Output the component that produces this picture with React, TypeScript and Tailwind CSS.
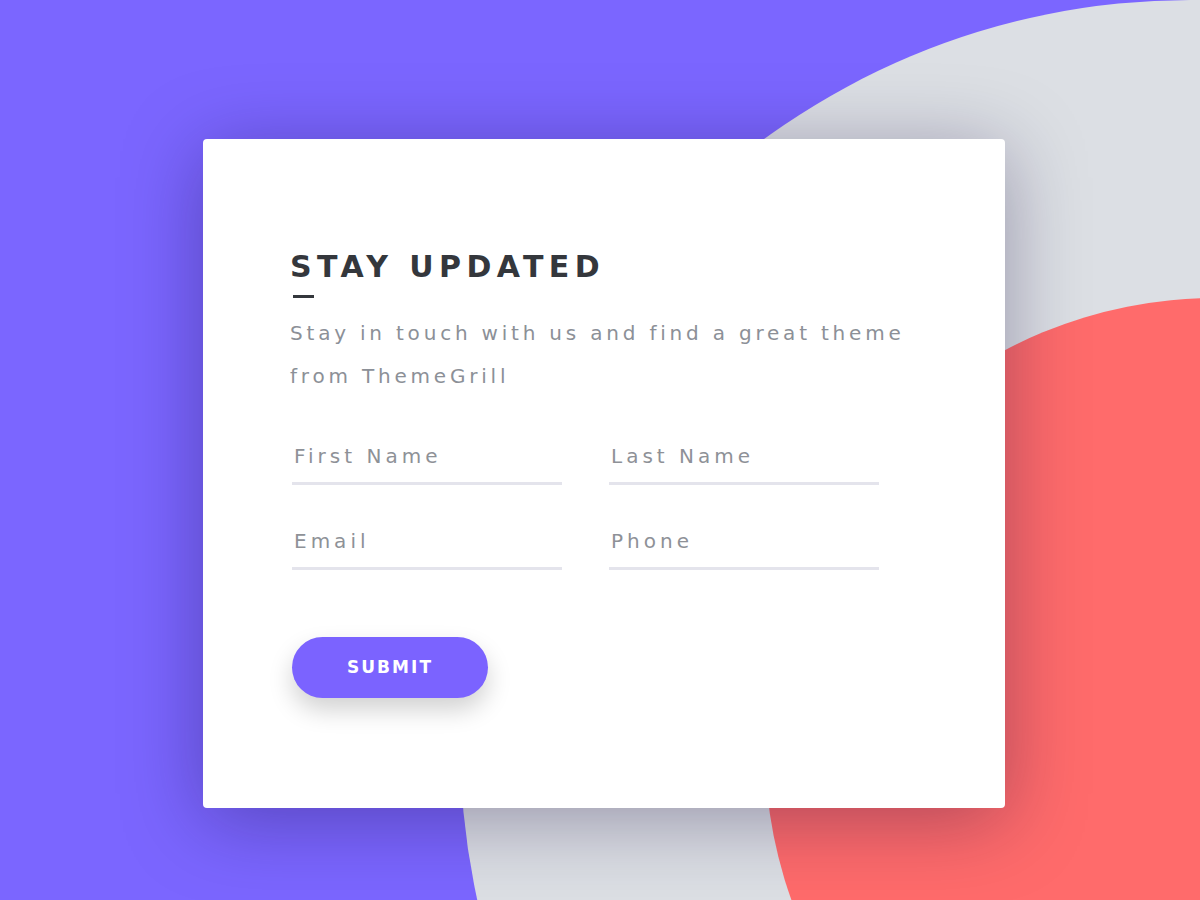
import React from "react";

const font = { fontFamily: '"DejaVu Sans", "Open Sans", sans-serif' };

function Field({ label }: { label: string }) {
  return (
    <div className="flex flex-col">
      <div className="pl-[2px] text-[20px] leading-[26px] tracking-[0.2em] text-[#8e9197]">{label}</div>
      <div className="mt-[13px] h-[3px] w-[270px] bg-[#e4e4ec]" />
    </div>
  );
}

export default function App() {
  return (
    <div
      className="relative h-[900px] w-[1200px] overflow-hidden bg-[#7b66ff]"
      style={font}
    >
      <div className="absolute left-[460px] top-[0px] h-[1480px] w-[1460px] rounded-[50%] bg-[#dcdfe4]" />
      <div className="absolute left-[765px] top-[298px] h-[900px] w-[900px] rounded-full bg-[#ff6b6b]" />
      <div className="relative pl-[203px] pt-[139px]">
        <div className="flex h-[669px] w-[802px] flex-col rounded-[4px] bg-white pl-[87px] pt-[104px] shadow-[0_12px_80px_rgba(20,10,60,0.35)]">
          <h1 className="text-[30px] font-bold leading-[48px] tracking-[0.18em] text-[#34373c]">STAY UPDATED</h1>
          <div className="mt-[4px] ml-[3px] h-[3px] w-[21px] bg-[#34373c]" />
          <p className="mt-[14px] w-[680px] text-[20px] leading-[43px] tracking-[0.19em] text-[#8c9097]">
            Stay in touch with us and find a great theme from ThemeGrill
          </p>
          <div className="mt-[45px] grid w-[587px] grid-cols-[270px_270px] gap-x-[47px] gap-y-[43px] pl-[2px]">
            <Field label="First Name" />
            <Field label="Last Name" />
            <Field label="Email" />
            <Field label="Phone" />
          </div>
          <button className="mt-[67px] ml-[2px] flex h-[61px] w-[196px] items-center justify-center rounded-full bg-[#7b63ff] text-[17px] font-bold tracking-[0.12em] text-white shadow-[0_12px_24px_rgba(0,0,0,0.18)]">
            SUBMIT
          </button>
        </div>
      </div>
    </div>
  );
}
